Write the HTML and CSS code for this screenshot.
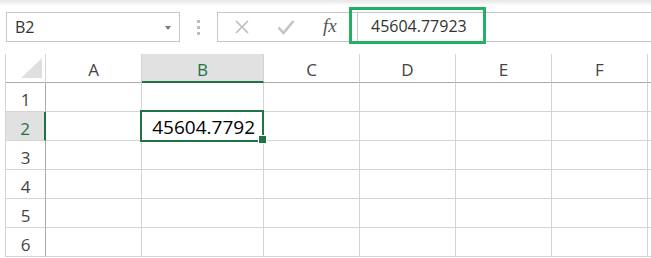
FILE: index.html
```html
<!DOCTYPE html>
<html lang="en">
<head>
    <meta charset="UTF-8">
    <title>Sheet</title>
    <link rel="stylesheet" href="styles.css">
</head>
<body>
    <div class="ribbon-edge"></div>

    <!-- Formula bar -->
    <div class="formula-row">
        <div class="name-box">
            <span>B2</span>
            <span class="caret"></span>
        </div>
        <div class="grip">
            <span></span><span></span><span></span>
        </div>
        <div class="formula-bar">
            <div class="fx-buttons">
                <svg class="icon" width="16" height="16" viewBox="0 0 16 16">
                    <path d="M2 2 L14 14 M14 2 L2 14" stroke="#bdbdbd" stroke-width="1.6" fill="none"/>
                </svg>
                <svg class="icon" width="18" height="16" viewBox="0 0 18 16">
                    <path d="M1.5 8.5 L6.5 14 L16.5 2" stroke="#c4c4c4" stroke-width="2.6" fill="none"/>
                </svg>
                <span class="fx">fx</span>
            </div>
            <div class="formula-input">45604.77923</div>
        </div>
    </div>

    <div class="highlight"></div>

    <!-- Grid -->
    <div class="sheet">
        <div class="corner"><span class="tri"></span></div>
        <div class="col-head">A</div>
        <div class="col-head selected">B</div>
        <div class="col-head">C</div>
        <div class="col-head">D</div>
        <div class="col-head">E</div>
        <div class="col-head">F</div>
        <div class="col-head"></div>

        <div class="row-head">1</div>
        <div class="cell"></div><div class="cell"></div><div class="cell"></div><div class="cell"></div><div class="cell"></div><div class="cell"></div><div class="cell"></div>

        <div class="row-head selected">2</div>
        <div class="cell"></div>
        <div class="cell active">45604.7792</div>
        <div class="cell"></div><div class="cell"></div><div class="cell"></div><div class="cell"></div><div class="cell"></div>

        <div class="row-head">3</div>
        <div class="cell"></div><div class="cell"></div><div class="cell"></div><div class="cell"></div><div class="cell"></div><div class="cell"></div><div class="cell"></div>

        <div class="row-head">4</div>
        <div class="cell"></div><div class="cell"></div><div class="cell"></div><div class="cell"></div><div class="cell"></div><div class="cell"></div><div class="cell"></div>

        <div class="row-head">5</div>
        <div class="cell"></div><div class="cell"></div><div class="cell"></div><div class="cell"></div><div class="cell"></div><div class="cell"></div><div class="cell"></div>

        <div class="row-head">6</div>
        <div class="cell"></div><div class="cell"></div><div class="cell"></div><div class="cell"></div><div class="cell"></div><div class="cell"></div><div class="cell"></div>
    </div>
</body>
</html>
```

FILE: styles.css
```css
/* Variables */
:root {
    --border: #c6c6c6;
    --grid-line: #d4d4d4;
    --head-line: #ababab;
    --excel-green: #217346;
    --mark-green: #24b064;
    --head-bg: #e1e1e1;
    --text: #444444;
}

* {
    margin: 0;
    padding: 0;
    box-sizing: border-box;
}

body {
    position: relative;
    width: 651px;
    height: 258px;
    overflow: hidden;
    background: #ffffff;
    font-family: 'Open Sans', 'Noto Sans', sans-serif;
    color: var(--text);
}

.ribbon-edge {
    height: 6px;
    background: linear-gradient(#e6e6e6, #ffffff);
}

/* Formula row */
.formula-row {
    display: flex;
    height: 30px;
    margin-top: 6px;
}

.name-box {
    display: flex;
    align-items: center;
    justify-content: space-between;
    width: 174px;
    margin-left: 6px;
    padding: 0 8px 0 8px;
    border: 1px solid var(--border);
    font-size: 16px;
    color: #333;
}

.caret {
    width: 0;
    height: 0;
    border-left: 3.5px solid transparent;
    border-right: 3.5px solid transparent;
    border-top: 4px solid #777;
    margin-top: 1px;
}

.grip {
    width: 37px;
    display: flex;
    flex-direction: column;
    align-items: center;
    justify-content: center;
    gap: 3px;
}

.grip span {
    width: 3px;
    height: 3px;
    background: #bdbdbd;
}

.formula-bar {
    flex: 1;
    display: flex;
    border: 1px solid var(--border);
    border-right: none;
}

.fx-buttons {
    width: 139px;
    display: flex;
    align-items: center;
    padding-left: 16px;
}

.fx-buttons .icon {
    margin-right: 27px;
}

.fx-buttons .icon + .icon {
    margin-right: 28px;
}

.fx {
    font-family: 'Liberation Serif', 'DejaVu Serif', serif;
    font-style: italic;
    font-size: 19px;
    color: #555;
    margin-top: -3px;
}

.formula-input {
    flex: 1;
    border-left: 1px solid var(--border);
    padding-left: 13px;
    font-size: 16px;
    line-height: 27px;
    color: #333;
}

/* Green annotation frame */
.highlight {
    position: absolute;
    left: 349px;
    top: 7px;
    width: 137px;
    height: 37px;
    border: 3px solid var(--mark-green);
}

/* Sheet grid */
.sheet {
    display: grid;
    grid-template-columns: 40px 96px 122px 96px 96px 96px 96px 20px;
    grid-auto-rows: 29px;
    margin-top: 12px;
    margin-left: 5px;
    border-left: 1px solid var(--grid-line);
}

.corner {
    position: relative;
    border-right: 1px solid var(--grid-line);
    border-bottom: 1px solid var(--head-line);
}

.corner .tri {
    position: absolute;
    right: 3px;
    bottom: 4px;
    width: 0;
    height: 0;
    border-left: 21px solid transparent;
    border-bottom: 20px solid #dfdfdf;
}

.col-head {
    display: flex;
    align-items: flex-end;
    justify-content: center;
    padding-bottom: 1px;
    border-right: 1px solid var(--grid-line);
    border-bottom: 1px solid var(--head-line);
    font-size: 17px;
    color: var(--text);
}

.col-head.selected {
    background: var(--head-bg);
    border-bottom: 2px solid var(--excel-green);
    padding-bottom: 0;
    color: var(--excel-green);
}

.row-head {
    display: flex;
    align-items: flex-end;
    justify-content: center;
    border-right: 1px solid var(--head-line);
    border-bottom: 1px solid var(--grid-line);
    font-size: 17px;
    color: var(--text);
}

.row-head.selected {
    background: var(--head-bg);
    border-right: 2px solid var(--excel-green);
    color: var(--excel-green);
}

.cell {
    border-right: 1px solid var(--grid-line);
    border-bottom: 1px solid var(--grid-line);
}

.cell.active {
    position: relative;
    display: flex;
    align-items: flex-end;
    justify-content: flex-end;
    padding-right: 8px;
    font-size: 19px;
    line-height: 26px;
    color: #000;
}

.cell.active::after {
    content: '';
    position: absolute;
    top: -2px;
    left: -2px;
    right: -1px;
    bottom: -2px;
    border: 2px solid var(--excel-green);
}

.cell.active::before {
    content: '';
    position: absolute;
    right: -4px;
    bottom: -4px;
    width: 7px;
    height: 7px;
    background: var(--excel-green);
    border: 1px solid #fff;
    z-index: 1;
}
```
